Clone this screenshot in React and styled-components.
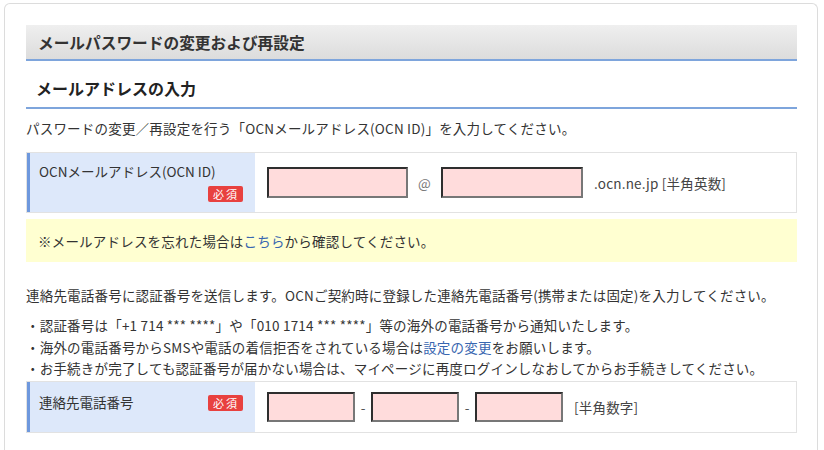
import React from "react";
import styled, { createGlobalStyle } from "styled-components";

const Global = createGlobalStyle`
  html, body { margin: 0; padding: 0; background: #fff; }
  body {
    font-family: "Noto Sans CJK JP", "Noto Sans", sans-serif;
    color: #333;
    font-size: 14px;
  }
`;

const Card = styled.div`
  margin: 3px 6px 0 4px;
  border: 1px solid #dcdcdc;
  border-bottom: none;
  border-radius: 6px 6px 0 0;
  padding: 21px 20px 0 21px;
  height: 447px;
  box-sizing: border-box;
  overflow: hidden;
`;

const PageTitle = styled.h1`
  margin: 0;
  height: 34px;
  padding: 0 12px;
  display: flex;
  align-items: center;
  font-size: 15.7px;
  font-weight: bold;
  color: #333;
  background: linear-gradient(#efefef, #dcdcdc);
  border-bottom: 2px solid #7ea5dc;
`;

const SectionTitle = styled.h2`
  margin: 14px 0 0;
  padding: 0 0 6px 10px;
  font-size: 16px;
  line-height: 26px;
  font-weight: bold;
  color: #222;
  border-bottom: 2px solid #7ea5dc;
`;

const Text = styled.p`
  margin: ${(p) => p.$margin || "0"};
  font-size: 13.5px;
  line-height: 20px;
  letter-spacing: 0.2px;
`;

const Bullets = styled.ul`
  margin: 10px 0 0;
  padding: 0;
  list-style: none;
  font-size: 13.5px;
  line-height: 21.5px;
  letter-spacing: 0.2px;
`;

const Link = styled.a`
  color: #3866b0;
  text-decoration: none;
`;

const FormRow = styled.div`
  display: flex;
  border: 1px solid #e2e2e2;
  height: ${(p) => p.$height}px;
  box-sizing: border-box;
  margin-top: ${(p) => p.$top || 0}px;
`;

const LabelCell = styled.div`
  width: 228px;
  flex: none;
  box-sizing: border-box;
  background: #dde8fa;
  border-left: 3px solid #6e98dd;
  padding: ${(p) => (p.$inline ? "10px 12px 0 9px" : "8px 12px 0 9px")};
  display: flex;
  flex-direction: ${(p) => (p.$inline ? "row" : "column")};
  justify-content: ${(p) => (p.$inline ? "space-between" : "flex-start")};
  align-items: ${(p) => (p.$inline ? "flex-start" : "stretch")};
  font-size: 13.5px;
  line-height: 20px;
`;

const Badge = styled.span`
  align-self: ${(p) => (p.$start ? "flex-start" : "flex-end")};
  display: inline-block;
  background: #e8413f;
  color: #fff;
  font-size: 11px;
  line-height: 16px;
  padding: 0 4px;
  border-radius: 2px;
  margin-top: ${(p) => p.$top || 0}px;
  letter-spacing: 2px;
  text-indent: 1px;
`;

const InputCell = styled.div`
  flex: 1;
  display: flex;
  align-items: center;
  padding-left: 12px;
  font-size: 13.5px;
  background: #fff;
`;

const Field = styled.input`
  width: ${(p) => p.$w}px;
  height: ${(p) => p.$h}px;
  box-sizing: border-box;
  background: #ffdcdc;
  border: 2px solid;
  border-color: #2e2e2e #777 #777 #2e2e2e;
  margin: 0;
  padding: 0;
`;

const Sep = styled.span`
  width: ${(p) => p.$w}px;
  text-align: center;
  color: ${(p) => p.$color || "#555"};
  font-size: 13.5px;
`;

const Note = styled.span`
  margin-left: 11px;
  color: #444;
  letter-spacing: 0.2px;
`;

const Notice = styled.div`
  margin-top: 6px;
  background: #ffffd1;
  height: 43px;
  padding: 0 12px;
  display: flex;
  align-items: center;
  font-size: 13.5px;
  letter-spacing: 0.2px;
`;

export default function App() {
  return (
    <>
      <Global />
      <Card>
        <PageTitle>メールパスワードの変更および再設定</PageTitle>
        <SectionTitle>メールアドレスの入力</SectionTitle>
        <Text $margin="9px 0 0">
          パスワードの変更／再設定を行う「OCNメールアドレス(OCN ID)」を入力してください。
        </Text>

        <FormRow $height={61} $top={14}>
          <LabelCell>
            <span>OCNメールアドレス(OCN ID)</span>
            <Badge $top={5}>必須</Badge>
          </LabelCell>
          <InputCell>
            <Field $w={141} $h={31} />
            <Sep $w={33} $color="#777">@</Sep>
            <Field $w={142} $h={31} />
            <Note>.ocn.ne.jp [半角英数]</Note>
          </InputCell>
        </FormRow>

        <Notice>
          ※メールアドレスを忘れた場合は<Link href="#">こちら</Link>から確認してください。
        </Notice>

        <Text $margin="23px 0 0">
          連絡先電話番号に認証番号を送信します。OCNご契約時に登録した連絡先電話番号(携帯または固定)を入力してください。
        </Text>
        <Bullets>
          <li>・認証番号は「+1 714 *** ****」や「010 1714 *** ****」等の海外の電話番号から通知いたします。</li>
          <li>・海外の電話番号からSMSや電話の着信拒否をされている場合は<Link href="#">設定の変更</Link>をお願いします。</li>
          <li>・お手続きが完了しても認証番号が届かない場合は、マイページに再度ログインしなおしてからお手続きしてください。</li>
        </Bullets>

        <FormRow $height={52} $top={1}>
          <LabelCell $inline>
            <span>連絡先電話番号</span>
            <Badge $top={3} $start>必須</Badge>
          </LabelCell>
          <InputCell>
            <Field $w={88} $h={30} />
            <Sep $w={16}>-</Sep>
            <Field $w={88} $h={30} />
            <Sep $w={16}>-</Sep>
            <Field $w={88} $h={30} />
            <Note>[半角数字]</Note>
          </InputCell>
        </FormRow>
      </Card>
    </>
  );
}
